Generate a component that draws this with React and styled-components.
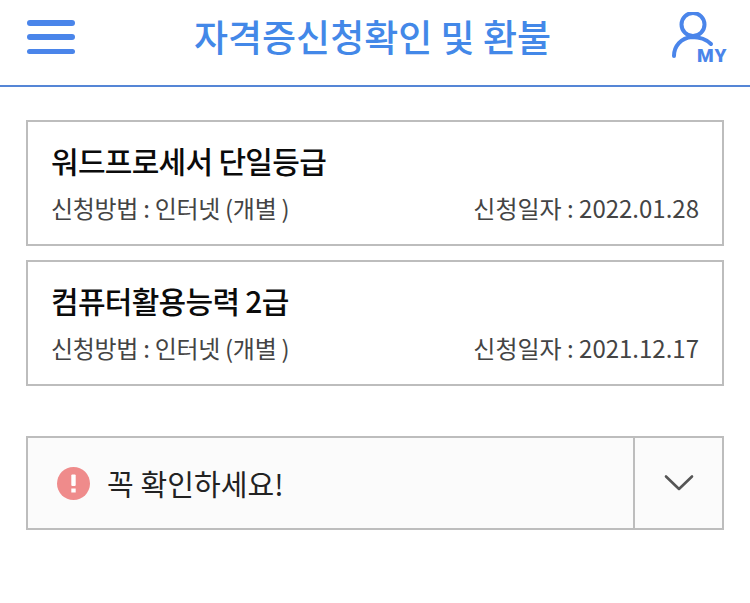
import React from "react";
import styled, { createGlobalStyle } from "styled-components";

const Global = createGlobalStyle`
  html, body { margin: 0; padding: 0; background: #fff; }
  * { box-sizing: border-box; }
  body { font-family: "Noto Sans CJK KR", "Liberation Sans", sans-serif; }
`;
const Page = styled.div`width: 750px; height: 603px; overflow: hidden; background: #fff;`;
const Header = styled.header`
  height: 87px; border-bottom: 2px solid #5586d6; padding: 0 22px 0 27px;
  display: flex; align-items: center; justify-content: space-between;
`;
const Menu = styled.button`
  width: 48px; height: 34px; padding: 0; margin-bottom: 11px; border: 0; background: none;
  display: flex; flex-direction: column; justify-content: space-between;
  span { display: block; height: 5.5px; border-radius: 3px; background: #4a85ea; }
`;
const Title = styled.h1`
  margin: 0 0 13px; font-size: 37px; line-height: 44px; font-weight: 500; color: #4388e8; letter-spacing: 0;
`;
const Content = styled.main`padding: 33px 26px 0; display: flex; flex-direction: column; gap: 14px;`;
const Card = styled.section`
  height: 126px; border: 2px solid #bdbdbd; padding: 16px 23px 0; background: #fff;
`;
const CardTitle = styled.h2`
  margin: 0; font-size: 30px; line-height: 44px; font-weight: 500; color: #0b0b0b; letter-spacing: -0.7px;
`;
const Meta = styled.div`
  margin-top: 8px; display: flex; justify-content: space-between;
  font-size: 24px; line-height: 36px; color: #444; letter-spacing: -0.3px; font-weight: 400;
`;
const MetaDate = styled.span`letter-spacing: 0;`;
const Notice = styled.div`
  margin-top: 36px; height: 94px; border: 2px solid #bdbdbd; background: #fbfbfb; display: flex;
`;
const NoticeLabel = styled.div`
  flex: 1; display: flex; align-items: center; gap: 17px; padding-left: 29px;
  font-size: 29px; color: #222; line-height: 40px; letter-spacing: 0.1px;
`;
const Toggle = styled.div`
  width: 89px; border-left: 2px solid #bdbdbd; display: flex; align-items: center; justify-content: center;
`;

const Row = ({ title, date }) => (
  <Card>
    <CardTitle>{title}</CardTitle>
    <Meta>
      <span>신청방법 : 인터넷 (개별 )</span>
      <MetaDate>신청일자 : {date}</MetaDate>
    </Meta>
  </Card>
);

export default function App() {
  return (
    <Page>
      <Global />
      <Header>
        <Menu aria-label="메뉴"><span /><span /><span /></Menu>
        <Title>자격증신청확인 및 환불</Title>
        <svg width="58" height="61" viewBox="670 12 58 61" fill="none" aria-label="MY">
          <circle cx="693" cy="24.5" r="11.5" stroke="#4a85ea" strokeWidth="4" />
          <path d="M674 56 C674 46 681 38 692 37 C700 37 706 39 711 44" stroke="#4a85ea" strokeWidth="4" strokeLinecap="round" />
          <text x="697" y="62" fontFamily="Roboto, sans-serif" fontWeight="900" fontSize="19" fill="#4a85ea" letterSpacing="1.2">MY</text>
        </svg>
      </Header>
      <Content>
        <Row title="워드프로세서 단일등급" date="2022.01.28" />
        <Row title="컴퓨터활용능력 2급" date="2021.12.17" />
        <Notice>
          <NoticeLabel>
            <svg width="33" height="33" viewBox="0 0 33 33" aria-hidden="true">
              <circle cx="16.5" cy="16.5" r="16.5" fill="#ef8b8b" />
              <rect x="14.3" y="7.5" width="4.4" height="11.5" rx="1" fill="#fff" />
              <rect x="14.3" y="21.5" width="4.4" height="4" fill="#fff" />
            </svg>
            꼭 확인하세요!
          </NoticeLabel>
          <Toggle>
            <svg width="30" height="18" viewBox="0 0 30 18" fill="none" aria-hidden="true">
              <path d="M2 2.5 L15 15 L28 2.5" stroke="#555" strokeWidth="2.6" strokeLinecap="round" strokeLinejoin="round" />
            </svg>
          </Toggle>
        </Notice>
      </Content>
    </Page>
  );
}
